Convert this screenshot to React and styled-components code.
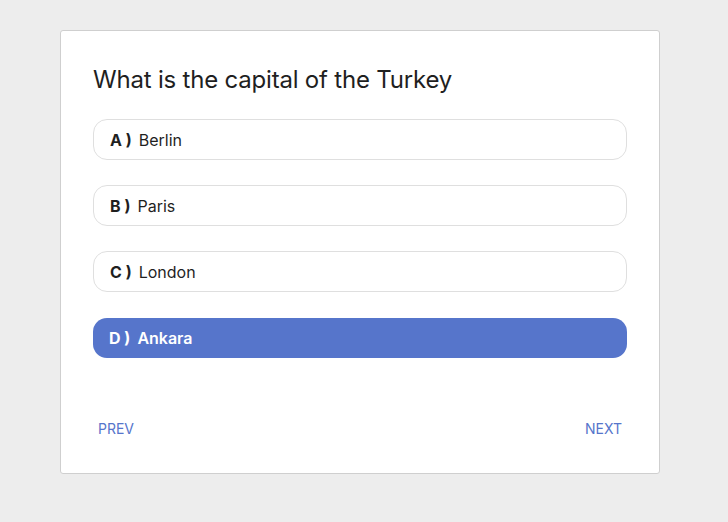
import styled, { createGlobalStyle } from "styled-components";

const GlobalStyle = createGlobalStyle`
  html, body {
    margin: 0;
    padding: 0;
    background: #ededed;
    font-family: Inter, "Noto Sans", sans-serif;
  }
`;

const Page = styled.div`
  display: flex;
  justify-content: center;
  align-items: flex-start;
  width: 720px;
  padding-top: 30px;
  min-height: 522px;
  box-sizing: border-box;
`;

const Card = styled.div`
  width: 600px;
  box-sizing: border-box;
  background: #fff;
  border: 1px solid #cfcfcf;
  border-radius: 3px;
  padding: 32px 32px 27px;
`;

const Question = styled.h1`
  margin: 0 0 22px;
  font-size: 24px;
  line-height: 34px;
  font-weight: 400;
  color: #1f1f1f;
  letter-spacing: -0.2px;
`;

const Options = styled.div`
  display: flex;
  flex-direction: column;
  gap: 25px;
`;

const Option = styled.div`
  display: flex;
  align-items: center;
  height: ${(p) => (p.$active ? "40px" : "41px")};
  margin-top: ${(p) => (p.$active ? "1px" : "0")};
  box-sizing: border-box;
  padding: 0 16px;
  border-radius: 14px;
  border: ${(p) => (p.$active ? "none" : "1px solid #dfdfdf")};
  background: ${(p) => (p.$active ? "#5675cb" : "#fff")};
  color: ${(p) => (p.$active ? "#fff" : "#1f1f1f")};
  font-size: 16px;
  font-weight: ${(p) => (p.$active ? 600 : 400)};
`;

const Letter = styled.span`
  font-weight: 700;
  margin-right: 7px;
`;

const Footer = styled.div`
  display: flex;
  justify-content: space-between;
  margin-top: 52px;
`;

const NavButton = styled.button`
  height: 36px;
  padding: 0 5px;
  border: none;
  background: none;
  font-family: inherit;
  font-size: 14px;
  color: #5675cb;
  cursor: pointer;
`;

const options = [
  ["A", "Berlin"],
  ["B", "Paris"],
  ["C", "London"],
  ["D", "Ankara"],
];

export default function App() {
  return (
    <>
      <GlobalStyle />
      <Page>
        <Card>
          <Question>What is the capital of the Turkey</Question>
          <Options>
            {options.map(([l, name]) => (
              <Option key={l} $active={l === "D"}>
                <Letter>{l} )</Letter>
                {name}
              </Option>
            ))}
          </Options>
          <Footer>
            <NavButton>PREV</NavButton>
            <NavButton>NEXT</NavButton>
          </Footer>
        </Card>
      </Page>
    </>
  );
}
